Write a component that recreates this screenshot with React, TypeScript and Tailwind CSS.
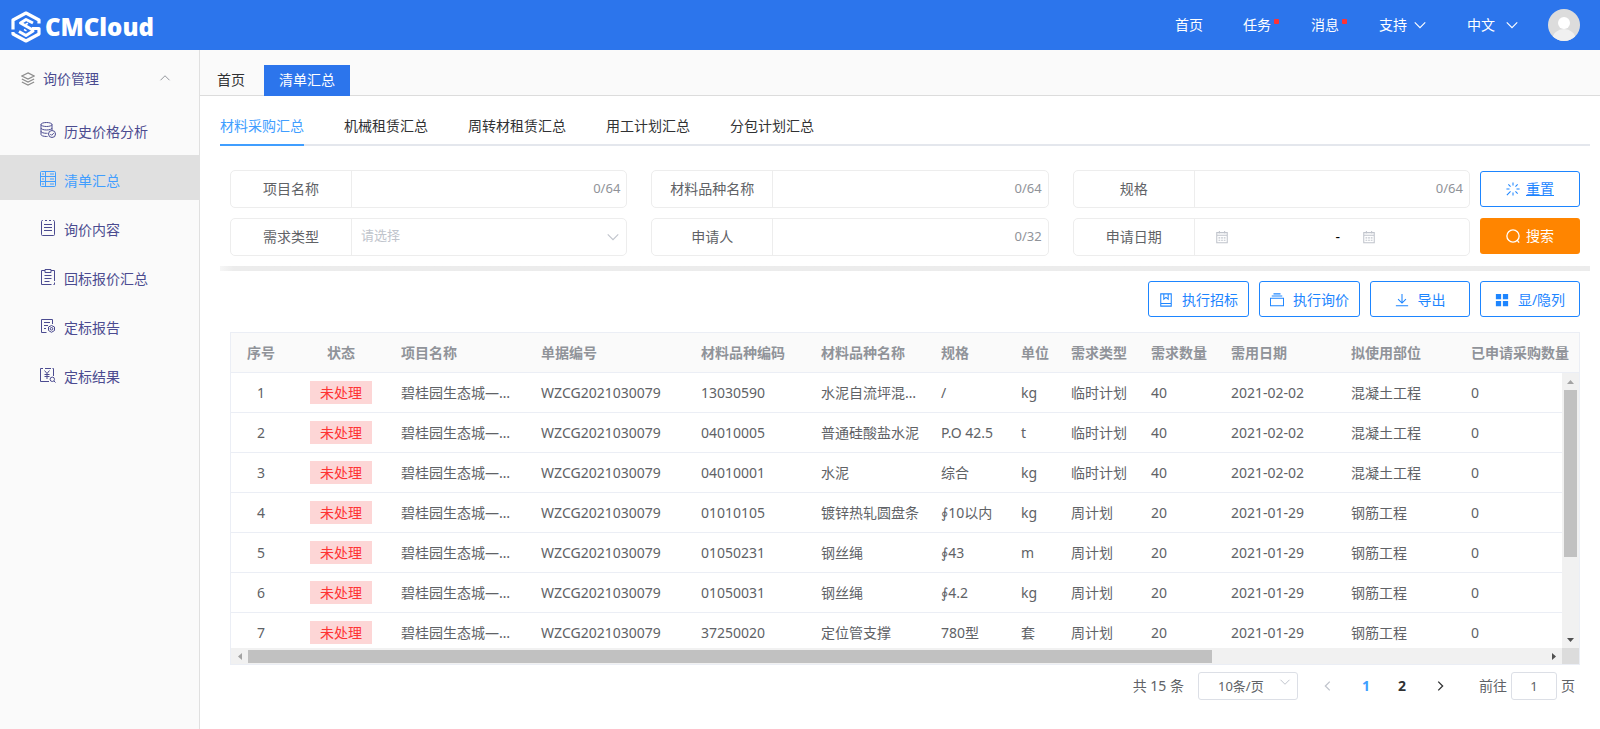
import type { ReactNode } from 'react';

const Chevron = ({ dir = 'down', className = '' }: { dir?: 'up' | 'down' | 'left' | 'right'; className?: string }) => {
  const d = {
    down: 'M2 5l6 6 6-6',
    up: 'M2 11l6-6 6 6',
    left: 'M10 3L5 8l5 5',
    right: 'M6 3l5 5-5 5',
  }[dir];
  return (
    <svg viewBox="0 0 16 16" fill="none" stroke="currentColor" strokeWidth="1.300" aria-hidden="true" className={className}>
      <path d={d} />
    </svg>
  );
};

const Icon = ({ children, className = 'size-4' }: { children: ReactNode; className?: string }) => (
  <svg viewBox="0 0 16 16" fill="none" stroke="currentColor" aria-hidden="true" className={'shrink-0 ' + className}>
    {children}
  </svg>
);

const Logo = () => (
  <a href="#" className="flex items-center gap-1 text-white">
    <svg viewBox="0 0 30 32" className="mt-1 h-8 w-[30px]" fill="none" stroke="currentColor" strokeWidth="3.200" strokeLinejoin="round" aria-hidden="true">
      <path d="M2 18.500V9L15 2L28 9V12.500" />
      <path d="M21 17.500H28V23L15 30L2 23V21" />
      <path d="M22 12L15 8.500L9.500 12L21 18.500L22 20L15 24.500L8 20.500" strokeWidth="3" />
      <path d="M14.500 13.500L17 12.300M13 18.500L15.500 19.800" strokeWidth="1.500" />
    </svg>
    <span className="pt-1 font-['Open_Sans'] text-2xl leading-8 font-extrabold">CMCloud</span>
  </a>
);

const menu: { label: string; active?: boolean; icon: ReactNode }[] = [
  {
    label: '历史价格分析',
    icon: (
      <>
        <ellipse cx="6.500" cy="2.500" rx="5.500" ry="2" />
        <path d="M1 2.500v10c0 1.100 2.500 2 5.500 2h1M12 2.500V8M1 6c0 1.100 2.500 2 5.500 2S12 7.100 12 6M1 9.300c0 1.100 2.500 2 5.500 2h1" />
        <circle cx="12" cy="12" r="3.500" />
        <path d="M10.300 12l1.300 1.300 2.200-2.200" />
      </>
    ),
  },
  {
    label: '清单汇总',
    active: true,
    icon: (
      <>
        <rect x=".5" y=".5" width="15" height="15" rx="1" />
        <path d="M.5 5.500h15M.5 10.500h15M5.500 .5v15M2 3h2M2 8h2M2 13h2M10 3h4M10 8h4M10 13h4" />
      </>
    ),
  },
  {
    label: '询价内容',
    icon: (
      <>
        <path d="M3 .5H2.500a1 1 0 0 0-1 1v13a1 1 0 0 0 1 1h11a1 1 0 0 0 1-1v-13a1 1 0 0 0-1-1H13M5 .5h2M9 .5h2" />
        <path d="M4 4.500h8M4 7.500h8M4 10.500h8" />
      </>
    ),
  },
  {
    label: '回标报价汇总',
    icon: (
      <>
        <path d="M5 1.500H1.500v14h10M11 1.500h3.500V12M14.500 13.500v2h-1" />
        <path d="M5 .5h6v3H5zM4.500 6.500h7M4.500 9.500h7M4.500 12.500h5" />
      </>
    ),
  },
  {
    label: '定标报告',
    icon: (
      <>
        <path d="M6.500 14.500h-5V1.500h11V6M4 4.500h6M4 7.500h4M4 10.500h2" />
        <path d="M11.500 7.500l3 1.500v3.500l-3 1.800-3-1.800V9z" />
        <circle cx="11.500" cy="10.800" r="1.300" />
      </>
    ),
  },
  {
    label: '定标结果',
    icon: (
      <>
        <path d="M3 1.500H.5v13H9M5 1.500h6M12.500 1.500h1V9" />
        <path d="M4.500 3.500L7 6.500l2.500-3M7 6.500V12M4.500 7.500h5M4.500 9.500h5" />
        <circle cx="12.300" cy="12.300" r="2.200" />
        <path d="M14 14l1.500 1.500" />
      </>
    ),
  },
];

const Sidebar = () => (
  <aside className="w-[200px] shrink-0 border-r border-[#e0e0e0] bg-[#fafafa] text-sm text-[#4b4b90]">
    <button type="button" className="flex h-14 w-full items-center pt-0.5 pr-7 pl-[21px]">
      <Icon className="size-3.5 text-[#8c8c8c]">
        <path strokeWidth="1.300" d="M8 1l7 3.500L8 8 1 4.500zM1 8l7 3.500L15 8M1 11.500L8 15l7-3.500" />
      </Icon>
      <span className="ml-2">询价管理</span>
      <Chevron dir="up" className="mb-0.5 ml-auto size-3 text-[#909399]" />
    </button>
    <nav className="flex flex-col gap-1">
      {menu.map((m) => (
        <a
          key={m.label}
          href="#"
          className={'flex h-[45px] items-center gap-2 pt-0.5 pl-10 ' + (m.active ? 'bg-[#e0e0e0] text-[#409eff]' : '')}
        >
          <Icon>{m.icon}</Icon>
          <span className="pt-1">{m.label}</span>
        </a>
      ))}
    </nav>
  </aside>
);

const Header = () => (
  <header className="flex h-[50px] items-center justify-between bg-[#2c75ec] pr-5 pl-[11px] text-sm text-white">
    <Logo />
    <nav className="flex items-center">
      <a href="#">首页</a>
      <a href="#" className="relative ml-10">
        任务
        <span className="absolute top-1 -right-2 size-[5px] rounded-[1px] bg-[#ff3333]" />
      </a>
      <a href="#" className="relative ml-10">
        消息
        <span className="absolute top-1 -right-2 size-[5px] rounded-[1px] bg-[#ff3333]" />
      </a>
      <button type="button" className="ml-10 flex items-center gap-1.5">
        支持 <Chevron className="size-3.5" />
      </button>
      <button type="button" className="ml-10 flex items-center gap-2.5">
        中文 <Chevron className="size-3.5" />
      </button>
      <button type="button" aria-label="用户" className="ml-[29px]">
        <svg viewBox="0 0 32 32" className="size-8" aria-hidden="true">
          <clipPath id="avatar">
            <circle cx="16" cy="16" r="16" />
          </clipPath>
          <g clipPath="url(#avatar)">
            <rect width="32" height="32" fill="#dcdcdc" />
            <ellipse cx="16" cy="30" rx="11.500" ry="10" fill="#f0f0f0" />
            <circle cx="16" cy="14" r="6" fill="#fff" />
          </g>
        </svg>
      </button>
    </nav>
  </header>
);

const Field = ({ label, id, children }: { label: string; id: string; children: ReactNode }) => (
  <div className="flex h-[38px] min-w-0 flex-1 items-stretch rounded-[5px] border border-[#ededed] text-[#606266]">
    <label htmlFor={id} className="flex w-[121px] shrink-0 items-center justify-center border-r border-[#ededed] text-sm">
      {label}
    </label>
    {children}
  </div>
);

const Text = ({ label, id, max }: { label: string; id: string; max: number }) => (
  <Field label={label} id={id}>
    <input id={id} maxLength={max} className="min-w-0 flex-1 px-2.5 text-sm outline-none" />
    <span className="flex items-center pr-1.5 text-[13px] text-[#909399]">0/{max}</span>
  </Field>
);

const Calendar = () => (
  <Icon className="size-3.5 text-[#c0c4cc]">
    <path strokeWidth="1.200" d="M2 3h12v11.500H2zM2 6h12M5 1v3M11 1v3" />
    <path strokeWidth="1.200" d="M4 9h8M4 11.800h8" strokeDasharray="2 1" />
  </Icon>
);

const Search = () => (
  <form className="mx-2.5 mt-6 flex gap-2.5" onSubmit={(e) => e.preventDefault()}>
    <div className="flex flex-1 flex-col gap-2.5">
      <div className="flex gap-6">
        <Text label="项目名称" id="project" max={64} />
        <Text label="材料品种名称" id="material" max={64} />
        <Text label="规格" id="spec" max={64} />
      </div>
      <div className="flex gap-6">
        <Field label="需求类型" id="kind">
          <div className="relative flex min-w-0 flex-1">
            <select id="kind" className="w-full appearance-none bg-transparent pb-0.5 pl-[9px] text-[13px] text-[#c0c4cc] outline-none">
              <option>请选择</option>
            </select>
            <Chevron className="pointer-events-none absolute top-[11px] right-1.5 size-3.5 text-[#c0c4cc]" />
          </div>
        </Field>
        <Text label="申请人" id="applicant" max={32} />
        <Field label="申请日期" id="from">
          <div className="flex min-w-0 flex-1 items-center pl-5 text-sm text-black">
            <Calendar />
            <input id="from" aria-label="开始日期" className="w-[22px] flex-auto pl-2 outline-none" />
            <span>-</span>
            <span className="w-[22px]" />
            <Calendar />
            <input aria-label="结束日期" className="w-2 flex-auto pl-2 outline-none" />
          </div>
        </Field>
      </div>
    </div>
    <div className="flex flex-col gap-[11px] pt-px text-sm">
      <button type="reset" className="flex h-9 w-[100px] items-center justify-center gap-1.5 rounded-[3px] border border-[#1d85ff] text-[#1d85ff]">
        <Icon className="size-3.5">
          <path strokeWidth="1.200" d="M8 .5V4M8 12v3.500M12 8h3.500M.5 8H4M10.800 5.200l2.500-2.500M10.800 10.800l2.500 2.500M5.200 5.200L2.700 2.700M5.200 10.800L1 15" />
        </Icon>
        <span className="underline">重置</span>
      </button>
      <button type="submit" className="flex h-9 w-[100px] items-center justify-center gap-1.5 rounded-[3px] bg-[#ff8500] text-white">
        <Icon className="size-3.5">
          <circle cx="8" cy="8" r="7" strokeWidth="1.500" />
          <path d="M12.500 12.500L15 15.500" strokeWidth="1.500" />
        </Icon>
        搜索
      </button>
    </div>
  </form>
);

const actions: { label: string; icon: ReactNode }[] = [
  { label: '执行招标', icon: <path strokeWidth="1.200" d="M2 1h12v14H2zM2 12h12M5.500 1v6L8 5l2.500 2V1" /> },
  { label: '执行询价', icon: <path strokeWidth="1.200" d="M.5 6h15v8.500H.5zM2 3.500h12M4 1h8" /> },
  { label: '导出', icon: <path strokeWidth="1.200" d="M8 1v10M3.500 7L8 11.500 12.500 7M1 14.500h14" /> },
  { label: '显/隐列', icon: <path fill="currentColor" stroke="none" d="M1 1h6v6H1zM9 1h6v6H9zM1 9h6v6H1zM9 9h6v6H9z" /> },
];

const cols = [
  { label: '序号', w: 60 },
  { label: '状态', w: 100 },
  { label: '项目名称', w: 140 },
  { label: '单据编号', w: 160 },
  { label: '材料品种编码', w: 120 },
  { label: '材料品种名称', w: 120 },
  { label: '规格', w: 80 },
  { label: '单位', w: 50 },
  { label: '需求类型', w: 80 },
  { label: '需求数量', w: 80 },
  { label: '需用日期', w: 120 },
  { label: '拟使用部位', w: 120 },
  { label: '已申请采购数量', w: 0 },
];

const rows = [
  ['13030590', '水泥自流坪混凝土', '/', 'kg', '临时计划', '40', '2021-02-02', '混凝土工程'],
  ['04010005', '普通硅酸盐水泥', 'P.O 42.5', 't', '临时计划', '40', '2021-02-02', '混凝土工程'],
  ['04010001', '水泥', '综合', 'kg', '临时计划', '40', '2021-02-02', '混凝土工程'],
  ['01010105', '镀锌热轧圆盘条', '∮10以内', 'kg', '周计划', '20', '2021-01-29', '钢筋工程'],
  ['01050231', '钢丝绳', '∮43', 'm', '周计划', '20', '2021-01-29', '钢筋工程'],
  ['01050031', '钢丝绳', '∮4.2', 'kg', '周计划', '20', '2021-01-29', '钢筋工程'],
  ['37250020', '定位管支撑', '780型', '套', '周计划', '20', '2021-01-29', '钢筋工程'],
];

const cellClass = [
  '',
  'truncate',
  "whitespace-nowrap font-['Noto_Sans','DejaVu_Sans','Noto_Sans_CJK_SC',sans-serif]",
];

const Arrow = ({ d, className }: { d: string; className: string }) => (
  <svg viewBox="0 0 17 17" className={'size-[17px] shrink-0 ' + className} fill="currentColor" aria-hidden="true">
    <path d={d} />
  </svg>
);

const Grid = () => (
  <div className="mx-2.5 mt-[15px] border border-[#ebeef5]">
    <div className="relative h-[315px] overflow-hidden">
      <table className="w-full table-fixed border-separate border-spacing-0 text-left text-sm text-[#606266]">
        <colgroup>
          {cols.map((c) => (
            <col key={c.label} style={c.w ? { width: c.w } : undefined} />
          ))}
        </colgroup>
        <thead>
          <tr className="text-[#909399]">
            {cols.map((c, i) => (
              <th
                key={c.label}
                className={'h-10 border-b border-[#ebeef5] bg-[#fafafa] px-2.5 font-bold whitespace-nowrap ' + (i < 2 ? 'text-center' : '')}
              >
                {c.label}
              </th>
            ))}
          </tr>
        </thead>
        <tbody className="[&_td]:h-10 [&_td]:border-b [&_td]:border-[#ebeef5] [&_td]:px-2.5">
          {rows.map((r, i) => (
            <tr key={r[0]}>
              <td className="text-center">{i + 1}</td>
              <td className="text-center">
                <span className="inline-block bg-[#fdd6d6] px-2.5 leading-[23px] text-[#ff3333]">未处理</span>
              </td>
              <td className="truncate">碧桂园生态城——一期</td>
              <td>WZCG2021030079</td>
              {r.map((v, j) => (
                <td key={j} className={cellClass[j]}>
                  {v}
                </td>
              ))}
              <td>0</td>
            </tr>
          ))}
        </tbody>
      </table>
      <div className="absolute top-10 right-0 bottom-0 flex w-[17px] flex-col bg-[#f1f1f1]">
        <Arrow d="M5 11l3.500-4 3.500 4z" className="text-[#a3a3a3]" />
        <div className="mx-0.5 h-[167px] bg-[#c1c1c1]" />
        <Arrow d="M5 7l3.500 4 3.500-4z" className="mt-auto text-[#505050]" />
      </div>
    </div>
    <div className="flex h-4 items-center bg-[#f1f1f1]">
      <Arrow d="M11 5L7 8.500l4 3.500z" className="text-[#a3a3a3]" />
      <div className="flex-1">
        <div className="h-[13px] w-[74.3%] bg-[#c1c1c1]" />
      </div>
      <Arrow d="M7 5l4 3.500L7 12z" className="text-[#505050]" />
      <div className="h-4 w-[17px] bg-[#dcdcdc]" />
    </div>
  </div>
);

const Pagination = () => (
  <div className="mx-2.5 mt-[7px] flex items-center justify-end pr-[5px] text-sm text-[#606266]">
    <span>共 15 条</span>
    <div className="relative ml-3.5">
      <select
        aria-label="每页条数"
        className="h-7 w-[100px] appearance-none rounded-[3px] border border-[#dcdfe6] bg-white pl-[19px] text-[13px] outline-none"
      >
        <option>10条/页</option>
      </select>
      <Chevron className="pointer-events-none absolute top-1 right-[7px] size-3 text-[#c0c4cc]" />
    </div>
    <button type="button" aria-label="上一页" className="ml-[23px] text-[#c0c4cc]">
      <Chevron dir="left" className="size-3.5 stroke-[1.5]" />
    </button>
    <button type="button" className="ml-[23px] w-4 text-sm font-bold text-[#409eff]">
      1
    </button>
    <button type="button" className="ml-5 w-4 text-sm font-bold text-[#303133]">
      2
    </button>
    <button type="button" aria-label="下一页" className="ml-[23px] text-[#303133]">
      <Chevron dir="right" className="size-3.5 stroke-[1.5]" />
    </button>
    <label htmlFor="page" className="ml-8">
      前往
    </label>
    <input id="page" defaultValue="1" className="mx-1 h-7 w-[46px] rounded-[3px] border border-[#dcdfe6] text-center text-[13px] outline-none" />
    <span>页</span>
  </div>
);

const subTabs = ['材料采购汇总', '机械租赁汇总', '周转材租赁汇总', '用工计划汇总', '分包计划汇总'];

export default function App() {
  return (
    <div className="flex min-h-screen flex-col bg-white font-['Noto_Sans','Noto_Sans_CJK_SC',sans-serif]">
      <Header />
      <div className="flex flex-1">
        <Sidebar />
        <main className="min-w-0 flex-1">
          <div className="flex h-[46px] items-end border-b border-[#dcdcdc] bg-[#fafafa] text-sm">
            <a href="#" className="flex h-[30px] items-center pr-[19px] pl-[17px] text-[#303133]">
              首页
            </a>
            <a href="#" className="-mb-px flex h-[31px] items-center bg-[#2c75ec] px-[15px] pb-0.5 text-white">
              清单汇总
            </a>
          </div>
          <div className="px-5 pr-2.5">
            <div className="mt-2.5 flex h-10 gap-10 border-b-2 border-[#e4e7ed] text-sm text-[#303133]">
              {subTabs.map((t, i) => (
                <button
                  key={t}
                  type="button"
                  className={'-mb-0.5 border-b-2 pt-0.5 ' + (i === 0 ? 'border-[#409eff] text-[#409eff]' : 'border-transparent')}
                >
                  {t}
                </button>
              ))}
            </div>
            <Search />
            <div className="mt-2.5 h-[5px] bg-linear-to-r from-[#f6f6f6] via-[#ececec] via-1% to-[#ececec]" />
            <div className="mx-2.5 mt-2.5 flex justify-end gap-2.5 text-sm text-[#1d85ff]">
              {actions.map((a) => (
                <button
                  key={a.label}
                  type="button"
                  className="flex h-9 min-w-[100px] items-center justify-center gap-[9px] rounded-[3px] border border-[#1d85ff] px-2.5 pt-px"
                >
                  <Icon className="size-3.5">{a.icon}</Icon>
                  {a.label}
                </button>
              ))}
            </div>
            <Grid />
            <Pagination />
          </div>
        </main>
      </div>
    </div>
  );
}
